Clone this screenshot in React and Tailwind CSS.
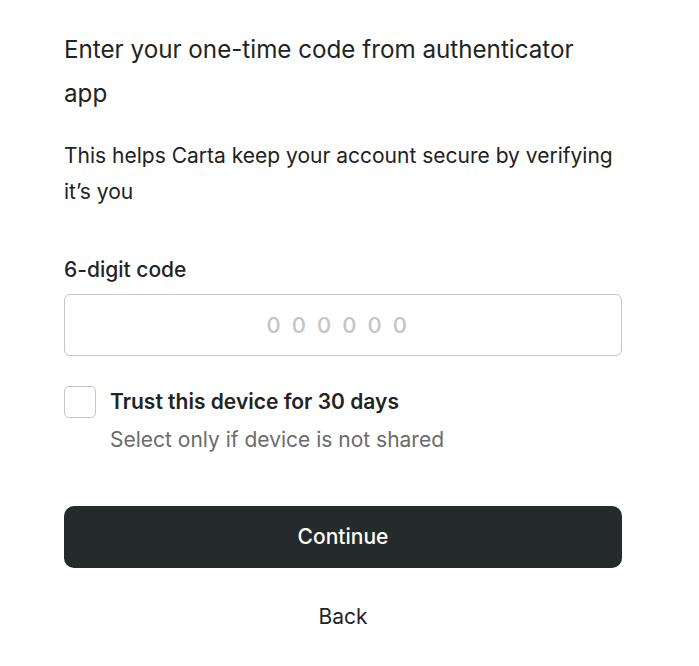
export default function App() {
  return (
    <div className="w-[699px] h-[666px] bg-white" style={{ fontFamily: "Inter, 'Noto Sans', sans-serif" }}>
      <div className="px-[64px] pt-[28px] w-[686px] text-[#1f2424]">
        <h1 className="max-w-[540px] text-[24.2px] font-normal leading-[44px]">Enter your one-time code from authenticator app</h1>
        <p className="mt-[22px] text-[21px] leading-[36px] text-[#222]">This helps Carta keep your account secure by verifying it’s you</p>

        <label className="block mt-[46px] text-[21px] font-medium leading-[28px]">6-digit code</label>
        <input
          type="text"
          placeholder="0 0 0 0 0 0"
          className="mt-[10px] w-full h-[62px] rounded-[6px] border border-[#c6c6c6] pr-[10px] text-center text-[22px] font-medium tracking-[2.6px] placeholder:text-[#c4c4c4] outline-none"
        />

        <div className="flex gap-[14px] mt-[30px]">
          <div className="w-[32px] h-[32px] rounded-[5px] border border-[#c6c6c6] shrink-0"></div>
          <div>
            <div className="text-[21px] font-semibold leading-[32px]">Trust this device for 30 days</div>
            <div className="mt-[4px] text-[21px] leading-[36px] text-[#6b6b6b]">Select only if device is not shared</div>
          </div>
        </div>

        <button className="mt-[48px] w-full h-[62px] rounded-[10px] bg-[#252b2b] text-white text-[21px] font-medium">Continue</button>
        <div className="mt-[35px] text-center text-[21px] leading-[28px]">Back</div>
      </div>
    </div>
  );
}
